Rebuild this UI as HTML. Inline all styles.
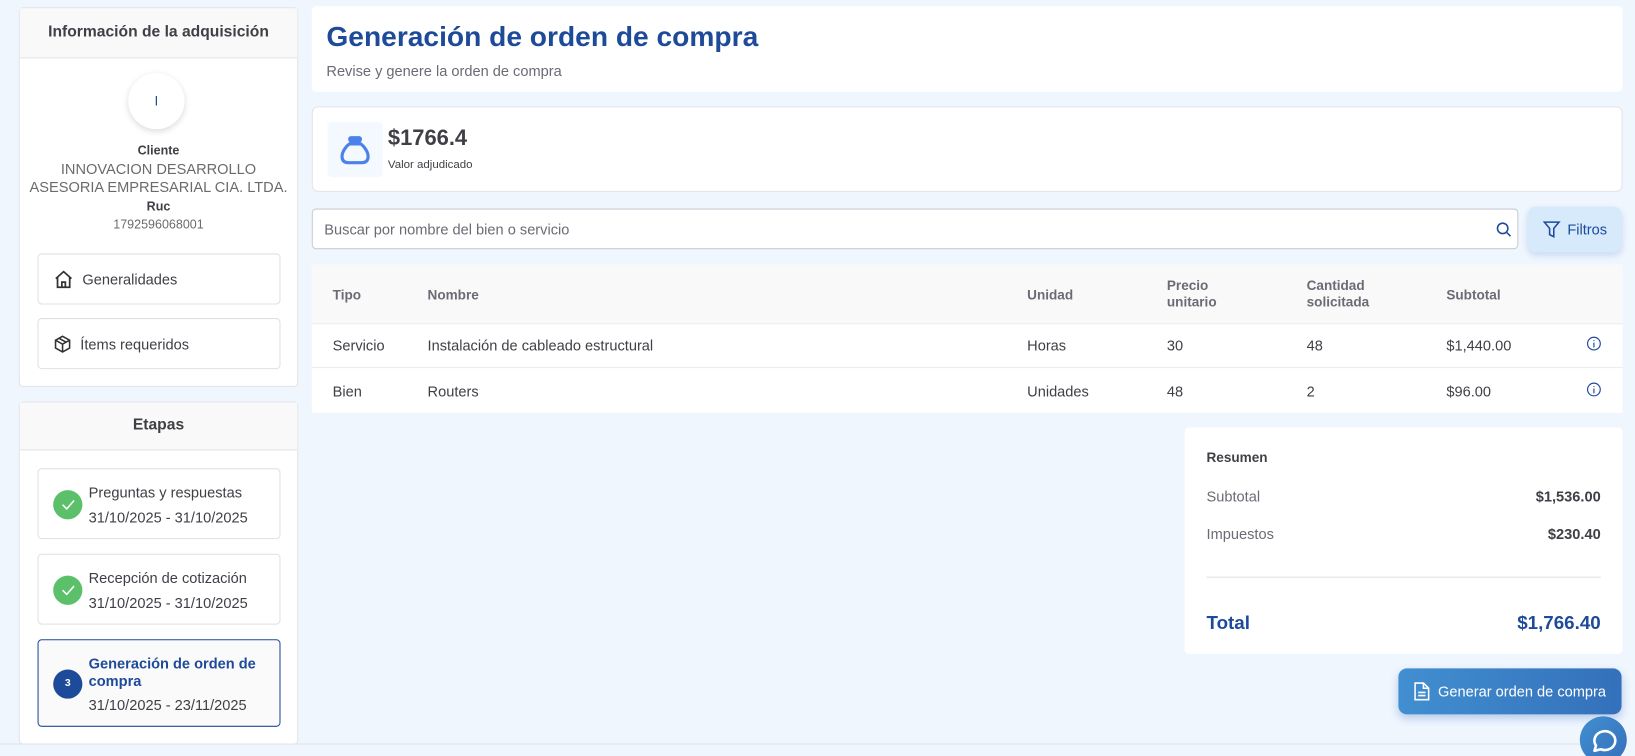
<!DOCTYPE html>
<html><head><meta charset="utf-8"><style>
*{box-sizing:border-box;margin:0;padding:0}
html,body{width:1635px;height:756px;overflow:hidden}
body{background:#eff6fe;font-family:"Liberation Sans",sans-serif;color:#3f3f46;position:relative}
#w{position:absolute;left:0;top:0;width:1568px;height:725px;transform:scale(1.0428);transform-origin:0 0}
.abs{position:absolute}
.card{position:absolute;background:#fff;border:1px solid #e4e4e7;border-radius:4px}
.hdr{background:#f9f9f9;border-bottom:1px solid #e4e4e7;text-align:center;font-weight:bold;font-size:15px;color:#3f3f46}
.btn{position:absolute;left:17px;width:233px;height:49px;border:1px solid #e0e0e0;border-radius:4px;background:#fff;font-size:14px;display:flex;align-items:center;padding-left:14px;gap:8px}
.stage{position:absolute;left:17px;width:233px;border:1px solid #e0e0e0;border-radius:4px;background:#fff;font-size:14px}
.chk{position:absolute;left:14px;width:28px;height:28px;border-radius:50%;background:#5cc06a}
.th{position:absolute;font-size:13px;font-weight:bold;color:#6b6b75;line-height:16px}
.td{position:absolute;font-size:14px;color:#3f3f46}
</style></head><body><div id="w">

<div class="card" style="left:18px;top:7px;width:268px;height:364px">
 <div class="hdr" style="height:48px;line-height:46px">Información de la adquisición</div>
 <div class="abs" style="left:104px;top:62px;width:54px;height:54px;border-radius:50%;background:#fff;box-shadow:0 2px 6px rgba(0,0,0,.15);text-align:center;line-height:54px;color:#1e4a9a;font-size:13px">I</div>
 <div class="abs" style="left:0;width:266px;top:129px;text-align:center;font-size:12px;font-weight:bold">Cliente</div>
 <div class="abs" style="left:0;width:266px;top:146px;text-align:center;font-size:14px;line-height:17px;color:#6b6b6b">INNOVACION DESARROLLO<br>ASESORIA EMPRESARIAL CIA. LTDA.</div>
 <div class="abs" style="left:0;width:266px;top:183px;text-align:center;font-size:12px;font-weight:bold">Ruc</div>
 <div class="abs" style="left:0;width:266px;top:200px;text-align:center;font-size:12px;color:#6b6b6b">1792596068001</div>
 <div class="btn" style="top:235px"><svg width="20" height="20" viewBox="0 0 24 24" fill="none" stroke="#333" stroke-width="2"><path d="M3 11L12 3l9 8M5 9v12h14V9M10 21v-6h4v6"/></svg>Generalidades</div>
 <div class="btn" style="top:297px"><svg width="18" height="18" viewBox="0 0 24 24" fill="none" stroke="#333" stroke-width="2"><path d="M12 2l9 5v10l-9 5-9-5V7zM3 7l9 5 9-5M12 12v10M7.5 4.5l9 5"/></svg>Ítems requeridos</div>
</div>

<div class="card" style="left:18px;top:385px;width:268px;height:329px">
 <div class="hdr" style="height:46px;line-height:44px">Etapas</div>
 <div class="stage" style="top:63px;height:68px"><div class="chk" style="top:20px"><svg width="28" height="28" viewBox="0 0 28 28"><path d="M9 14l4 4 7-8" fill="none" stroke="#fff" stroke-width="1.5"/></svg></div><div class="abs" style="left:48px;top:14px">Preguntas y respuestas</div><div class="abs" style="left:48px;top:38px">31/10/2025 - 31/10/2025</div></div>
 <div class="stage" style="top:145px;height:68px"><div class="chk" style="top:20px"><svg width="28" height="28" viewBox="0 0 28 28"><path d="M9 14l4 4 7-8" fill="none" stroke="#fff" stroke-width="1.5"/></svg></div><div class="abs" style="left:48px;top:14px">Recepción de cotización</div><div class="abs" style="left:48px;top:38px">31/10/2025 - 31/10/2025</div></div>
 <div class="stage" style="top:227px;height:84px;border-color:#1e4a9a;background:#fafafa"><div class="chk" style="top:28px;background:#1e4a9a;color:#fff;font-size:10px;font-weight:bold;text-align:center;line-height:28px">3</div><div class="abs" style="left:48px;top:14px;font-weight:bold;color:#1e4a9a;line-height:17px">Generación de orden de<br>compra</div><div class="abs" style="left:48px;top:54px">31/10/2025 - 23/11/2025</div></div>
</div>

<div class="abs" style="left:299px;top:6px;width:1257px;height:82px;background:#fff;border-radius:4px">
 <div class="abs" style="left:14px;top:14px;font-size:27px;font-weight:bold;color:#1e4a9a">Generación de orden de compra</div>
 <div class="abs" style="left:14px;top:54px;font-size:14px;color:#6b6b75">Revise y genere la orden de compra</div>
</div>

<div class="card" style="left:299px;top:102px;width:1257px;height:82px;border-radius:6px">
 <div class="abs" style="left:14px;top:14px;width:53px;height:53px;background:#f4f8ff;border-radius:4px"><svg width="53" height="53" viewBox="0 0 53 53"><path d="M21 18h11M22 18c-1-1-1-3 1-3h7c2 0 2 2 1 3M21 21c-4 3-7 8-7 12 0 4 2 6 6 6h13c4 0 6-2 6-6 0-4-3-9-7-12z" fill="none" stroke="#4b82ea" stroke-width="3" stroke-linejoin="round"/></svg></div>
 <div class="abs" style="left:72px;top:18px;font-size:21px;font-weight:bold">$1766.4</div>
 <div class="abs" style="left:72px;top:49px;font-size:11px">Valor adjudicado</div>
</div>

<div class="abs" style="left:299px;top:200px;width:1157px;height:39px;background:#fff;border:1px solid #c9ccd2;border-radius:4px">
 <div class="abs" style="left:11px;top:11px;font-size:14px;color:#6b6b75">Buscar por nombre del bien o servicio</div>
 <svg class="abs" style="left:1134px;top:11px" width="16" height="16" viewBox="0 0 16 16" fill="none" stroke="#1e4a9a" stroke-width="1.5"><circle cx="7" cy="7" r="5"/><path d="M11 11l3.5 3.5"/></svg>
</div>
<div class="abs" style="left:1465px;top:198px;width:90px;height:44px;background:#d6eafc;border-radius:8px;box-shadow:0 3px 6px rgba(60,100,200,.2);font-size:14px;color:#1e4a9a;line-height:44px;padding-left:38px">Filtros
 <svg class="abs" style="left:14px;top:13px" width="18" height="18" viewBox="0 0 18 18" fill="none" stroke="#1e4a9a" stroke-width="1.5"><path d="M2 2h14l-5 6v8l-4-2V8z"/></svg></div>

<div class="abs" style="left:299px;top:254px;width:1257px;height:142px;background:#fff">
 <div class="abs" style="left:0;top:0;width:1257px;height:57px;background:#f9f9f9;border-bottom:1px solid #ececec"></div>
 <div class="th" style="left:20px;top:21px">Tipo</div><div class="th" style="left:111px;top:21px">Nombre</div><div class="th" style="left:686px;top:21px">Unidad</div><div class="th" style="left:820px;top:12px">Precio<br>unitario</div><div class="th" style="left:954px;top:12px">Cantidad<br>solicitada</div><div class="th" style="left:1088px;top:21px">Subtotal</div>
 <div class="abs" style="left:0;top:98px;width:1257px;height:1px;background:#ececec"></div>
 <div class="td" style="left:20px;top:69px">Servicio</div><div class="td" style="left:111px;top:69px">Instalación de cableado estructural</div><div class="td" style="left:686px;top:69px">Horas</div><div class="td" style="left:820px;top:69px">30</div><div class="td" style="left:954px;top:69px">48</div><div class="td" style="left:1088px;top:69px">$1,440.00</div>
 <div class="td" style="left:20px;top:113px">Bien</div><div class="td" style="left:111px;top:113px">Routers</div><div class="td" style="left:686px;top:113px">Unidades</div><div class="td" style="left:820px;top:113px">48</div><div class="td" style="left:954px;top:113px">2</div><div class="td" style="left:1088px;top:113px">$96.00</div>
 <svg class="abs" style="left:1222px;top:68px" width="15" height="15" viewBox="0 0 16 16" fill="none" stroke="#1e4a9a" stroke-width="1.2"><circle cx="8" cy="8" r="6.5"/><path d="M8 7v5M8 4.5v1"/></svg>
 <svg class="abs" style="left:1222px;top:112px" width="15" height="15" viewBox="0 0 16 16" fill="none" stroke="#1e4a9a" stroke-width="1.2"><circle cx="8" cy="8" r="6.5"/><path d="M8 7v5M8 4.5v1"/></svg>
</div>

<div class="abs" style="left:1136px;top:410px;width:420px;height:217px;background:#fff;border-radius:4px">
 <div class="abs" style="left:21px;top:21px;font-size:13px;font-weight:bold">Resumen</div>
 <div class="abs" style="left:21px;top:58px;font-size:14px;color:#6b6b75">Subtotal</div><div class="abs" style="right:21px;top:58px;font-size:14px;font-weight:bold">$1,536.00</div>
 <div class="abs" style="left:21px;top:94px;font-size:14px;color:#6b6b75">Impuestos</div><div class="abs" style="right:21px;top:94px;font-size:14px;font-weight:bold">$230.40</div>
 <div class="abs" style="left:21px;top:143px;width:378px;height:1px;background:#e0e0e0"></div>
 <div class="abs" style="left:21px;top:177px;font-size:18px;font-weight:bold;color:#1e4a9a">Total</div><div class="abs" style="right:21px;top:177px;font-size:18px;font-weight:bold;color:#1e4a9a">$1,766.40</div>
</div>

<div class="abs" style="left:1341px;top:641px;width:214px;height:44px;border-radius:8px;background:linear-gradient(90deg,#418fd0,#3470bb);box-shadow:0 4px 8px rgba(50,100,190,.3);color:#fff;font-size:14px;line-height:44px;padding-left:38px">Generar orden de compra
 <svg class="abs" style="left:15px;top:13px" width="15" height="18" viewBox="0 0 15 18" fill="none" stroke="#fff" stroke-width="1.5"><path d="M1 1h8l5 5v11H1zM9 1v5h5M4 10h7M4 13h7"/></svg></div>

<div class="abs" style="left:0;top:713px;width:1515px;height:1px;background:#dfe3ea"></div>
<div class="abs" style="left:1515px;top:687px;width:45px;height:45px;border-radius:50%;background:linear-gradient(135deg,#418fd0,#3470bb)">
 <svg width="45" height="45" viewBox="0 0 45 45" fill="none" stroke="#fff" stroke-width="2.5"><path d="M14 33l1.5-5a10 9 0 1 1 4.5 3.5z" stroke-linejoin="round"/></svg></div>
</div></body></html>
